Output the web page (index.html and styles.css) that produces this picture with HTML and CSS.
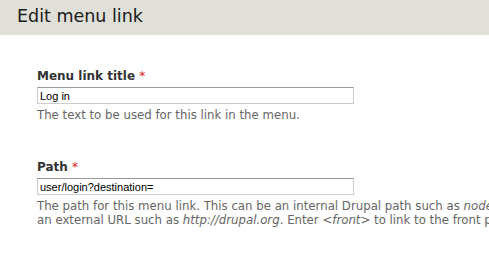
FILE: index.html
```html
<!DOCTYPE html>
<html>
<head>
<meta charset="utf-8">
<link rel="stylesheet" href="styles.css">
</head>
<body>
<div class="header"><h1 class="title">Edit menu link</h1></div>
<form class="form">
  <div class="field field-first">
    <label class="label">Menu link title <span class="req">*</span></label>
    <input class="text" type="text" value="Log in">
    <div class="desc">The text to be used for this link in the menu.</div>
  </div>
  <div class="field">
    <label class="label">Path <span class="req">*</span></label>
    <input class="text" type="text" value="user/login?destination=">
    <div class="desc">The path for this menu link. This can be an internal Drupal path such as <em>node/add</em> or<br>an external URL such as <em>http://drupal.org</em>. Enter <em>&lt;front&gt;</em> to link to the front page.</div>
  </div>
</form>
</body>
</html>
```
FILE: styles.css
```css
html, body {
  margin: 0;
  padding: 0;
  background: #fff;
  overflow: hidden;
}
body {
  width: 489px;
  height: 256px;
  font-family: "DejaVu Sans", sans-serif;
}
.header {
  background: #e0e0d8;
  height: 35px;
  padding-left: 17px;
  display: flex;
  align-items: center;
}
.title {
  margin: 0;
  font-size: 17.5px;
  font-weight: normal;
  color: #1a1a1a;
  line-height: 1;
  padding-bottom: 2px;
}
.form {
  padding-left: 37px;
}
.field {
  display: flex;
  flex-direction: column;
  align-items: flex-start;
}
.field-first {
  padding-top: 33px;
}
.field + .field {
  margin-top: 37px;
}
.label {
  font-weight: bold;
  font-size: 12px;
  color: #333;
  line-height: 16px;
  margin-bottom: 3px;
}
.req {
  color: #e02020;
  font-weight: normal;
}
.text {
  box-sizing: border-box;
  width: 317px;
  height: 17px;
  margin: 0;
  padding: 0 2px;
  border: 1px solid #ccc;
  border-top-color: #999;
  font-family: "Liberation Sans", Arial, sans-serif;
  font-size: 11px;
  color: #000;
  outline: none;
}
.desc {
  font-size: 11.75px;
  color: #666;
  line-height: 14px;
  margin-top: 4px;
  white-space: nowrap;
}
.desc em {
  font-style: italic;
}
```
